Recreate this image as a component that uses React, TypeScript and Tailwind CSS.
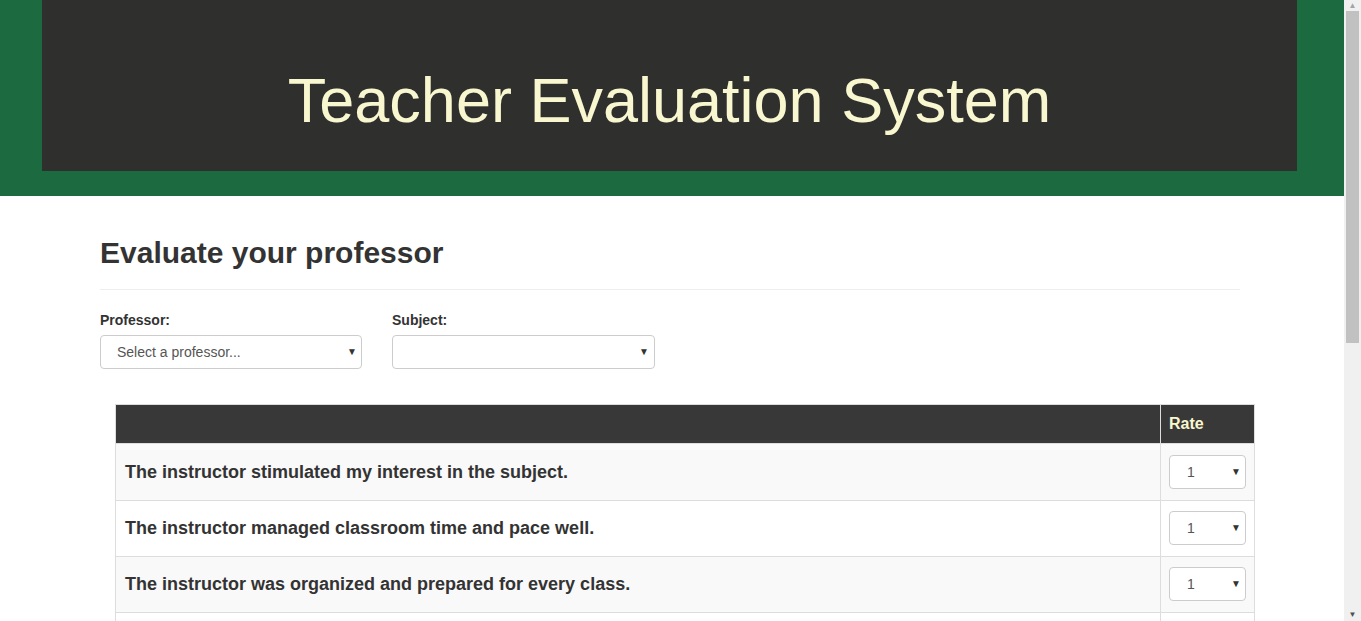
import React from "react";

const questions = [
  "The instructor stimulated my interest in the subject.",
  "The instructor managed classroom time and pace well.",
  "The instructor was organized and prepared for every class.",
  "The instructor encouraged discussions and responded to questions.",
];

function Caret() {
  return <span className="text-[10px] leading-none text-[#333]">▼</span>;
}

export default function App() {
  return (
    <div
      className="flex h-[621px] w-[1361px] overflow-hidden bg-white text-[#333]"
      style={{ fontFamily: '"Liberation Sans", Arial, sans-serif' }}
    >
      <div className="w-[1344px] shrink-0 overflow-hidden">
        <header className="h-[196px] bg-[#1c6a3f] pl-[42px] pr-[47px]">
          <div className="flex h-[171px] justify-center bg-[#2f2f2d] pt-[64px]">
            <h1 className="text-[63px] leading-[72px] text-[#f8f7cf]">Teacher Evaluation System</h1>
          </div>
        </header>
        <main className="px-[100px]">
          <div className="mt-[40px] w-[1140px] border-b border-[#eee] pb-[20px]">
            <h2 className="text-[30px] font-bold leading-[33px]">Evaluate your professor</h2>
          </div>
          <div className="mt-[20px] flex gap-[30px]">
            <div className="w-[262px]">
              <div className="text-[14px] font-bold leading-[20px]">Professor:</div>
              <div className="mt-[5px] flex h-[34px] items-center justify-between rounded-[4px] border border-[#ccc] pl-[16px] pr-[4px] text-[14px] text-[#555]">
                <span>Select a professor...</span>
                <Caret />
              </div>
            </div>
            <div className="w-[263px]">
              <div className="text-[14px] font-bold leading-[20px]">Subject:</div>
              <div className="mt-[5px] flex h-[34px] items-center justify-end rounded-[4px] border border-[#ccc] pr-[5px]">
                <Caret />
              </div>
            </div>
          </div>
          <table className="ml-[15px] mt-[35px] w-[1140px] border-collapse border border-[#ddd]">
            <thead>
              <tr className="h-[39px] bg-[#383838]">
                <th className="border border-[#ddd]" />
                <th className="w-[94px] border border-[#ddd] px-[8px] text-left text-[16px] font-bold text-[#f8f7cf]">
                  Rate
                </th>
              </tr>
            </thead>
            <tbody>
              {questions.map((q, i) => (
                <tr
                  key={i}
                  className={
                    i === 0 ? "h-[57px] bg-[#f9f9f9]" : i % 2 === 0 ? "h-[56px] bg-[#f9f9f9]" : "h-[56px] bg-white"
                  }
                >
                  <td className={i === 0 ? "border border-[#ddd] px-[9px] pt-[1px] text-[18px] font-bold" : "border border-[#ddd] px-[9px] pb-[1px] text-[18px] font-bold"}>{q}</td>
                  <td className={i === 0 ? "border border-[#ddd] px-[8px]" : "border border-[#ddd] px-[8px] pb-[1px]"}>
                    <div className="flex h-[34px] w-[77px] items-center justify-between rounded-[4px] border border-[#ccc] bg-white pl-[17px] pr-[4px] text-[14px] text-[#555]">
                      <span>1</span>
                      <Caret />
                    </div>
                  </td>
                </tr>
              ))}
            </tbody>
          </table>
        </main>
      </div>
      <div className="flex w-[17px] shrink-0 flex-col items-center bg-[#f0f0f0]">
        <div className="flex h-[11px] items-center text-[8px] leading-none text-[#a3a3a3]">▲</div>
        <div className="h-[332px] w-[13px] bg-[#c1c1c1]" />
        <div className="flex-1" />
        <div className="flex h-[13px] items-center text-[8px] leading-none text-[#505050]">▼</div>
      </div>
    </div>
  );
}
